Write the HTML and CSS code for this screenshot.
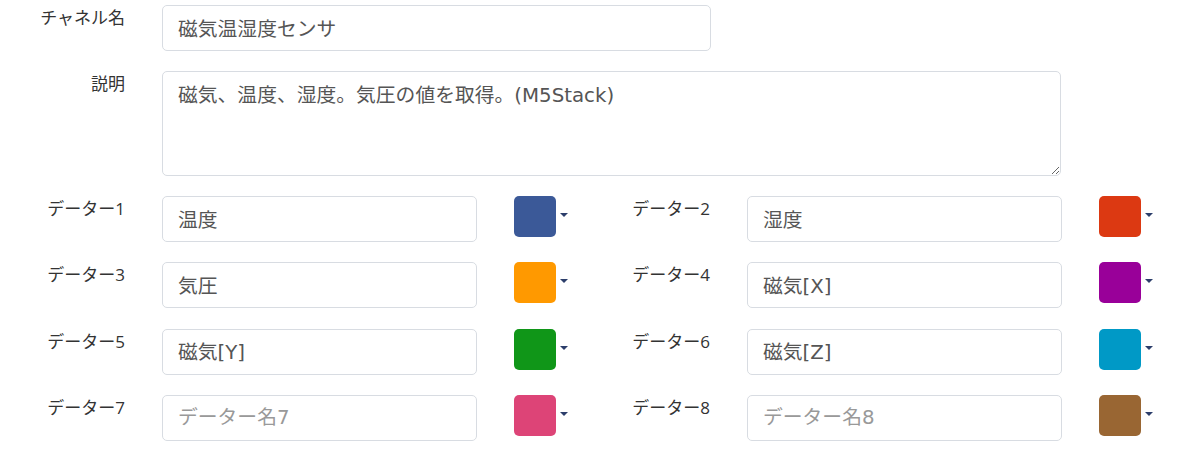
FILE: index.html
```html
<!DOCTYPE html>
<html lang="ja">
<head>
    <meta charset="UTF-8">
    <meta name="viewport" content="width=device-width, initial-scale=1.0">
    <title>チャネル設定</title>
    <link rel="stylesheet" href="styles.css">
</head>
<body>

<form class="channel-form">
    <div class="form-row">
        <label class="form-label" for="channelName">チャネル名</label>
        <input class="form-input name-input" type="text" id="channelName" value="磁気温湿度センサ">
    </div>

    <div class="form-row">
        <label class="form-label" for="description">説明</label>
        <textarea class="form-input desc-input" id="description">磁気、温度、湿度。気圧の値を取得。(M5Stack)</textarea>
    </div>

    <div class="data-grid">
        <div class="data-item">
            <label class="form-label" for="d1">データー1</label>
            <input class="form-input data-input" type="text" id="d1" value="温度" placeholder="データー名1">
            <span class="swatch" style="background:#3b5998"></span><span class="caret"></span>
        </div>
        <div class="data-item">
            <label class="form-label" for="d2">データー2</label>
            <input class="form-input data-input" type="text" id="d2" value="湿度" placeholder="データー名2">
            <span class="swatch" style="background:#dc3912"></span><span class="caret"></span>
        </div>
        <div class="data-item">
            <label class="form-label" for="d3">データー3</label>
            <input class="form-input data-input" type="text" id="d3" value="気圧" placeholder="データー名3">
            <span class="swatch" style="background:#ff9900"></span><span class="caret"></span>
        </div>
        <div class="data-item">
            <label class="form-label" for="d4">データー4</label>
            <input class="form-input data-input" type="text" id="d4" value="磁気[X]" placeholder="データー名4">
            <span class="swatch" style="background:#990099"></span><span class="caret"></span>
        </div>
        <div class="data-item">
            <label class="form-label" for="d5">データー5</label>
            <input class="form-input data-input" type="text" id="d5" value="磁気[Y]" placeholder="データー名5">
            <span class="swatch" style="background:#109618"></span><span class="caret"></span>
        </div>
        <div class="data-item">
            <label class="form-label" for="d6">データー6</label>
            <input class="form-input data-input" type="text" id="d6" value="磁気[Z]" placeholder="データー名6">
            <span class="swatch" style="background:#0099c6"></span><span class="caret"></span>
        </div>
        <div class="data-item">
            <label class="form-label" for="d7">データー7</label>
            <input class="form-input data-input" type="text" id="d7" placeholder="データー名7">
            <span class="swatch" style="background:#dd4477"></span><span class="caret"></span>
        </div>
        <div class="data-item">
            <label class="form-label" for="d8">データー8</label>
            <input class="form-input data-input" type="text" id="d8" placeholder="データー名8">
            <span class="swatch" style="background:#996633"></span><span class="caret"></span>
        </div>
    </div>
</form>

</body>
</html>
```

FILE: styles.css
```css
body {
    font-family: 'Open Sans', 'Noto Sans CJK JP', sans-serif;
    background: #fff;
    color: #333;
    margin: 0;
    padding: 5px 0 0 0;
}
.channel-form {
    display: flex;
    flex-direction: column;
    gap: 20px;
}
.form-row, .data-item {
    display: flex;
    align-items: flex-start;
}
.form-label {
    width: 125px;
    flex: none;
    text-align: right;
    font-size: 17px;
    line-height: 22px;
    padding-top: 2px;
    margin-right: 37px;
    color: #333;
}
.form-input {
    box-sizing: border-box;
    height: 46px;
    padding: 0 15px 2px;
    border: 1px solid #d8dce2;
    border-radius: 5px;
    font-family: 'DejaVu Sans', 'Noto Sans CJK JP', sans-serif;
    font-size: 19.8px;
    color: #555;
    background: #fff;
    outline: none;
}
.form-input::placeholder {
    color: #999;
}
.name-input {
    width: 549px;
}
.desc-input {
    width: 899px;
    height: 105px;
    padding: 11px 15px 7px;
    line-height: 26px;
    resize: vertical;
}
.data-grid {
    display: grid;
    grid-template-columns: 585px 585px;
    row-gap: 20.4px;
}
.data-input {
    width: 315px;
}
.swatch {
    width: 42px;
    height: 41px;
    margin-left: 37px;
    border-radius: 5px;
    flex: none;
}
.caret {
    width: 0;
    height: 0;
    margin: 17px 0 0 4px;
    border-left: 4px solid transparent;
    border-right: 4px solid transparent;
    border-top: 4px solid #2c3e6b;
}
```
